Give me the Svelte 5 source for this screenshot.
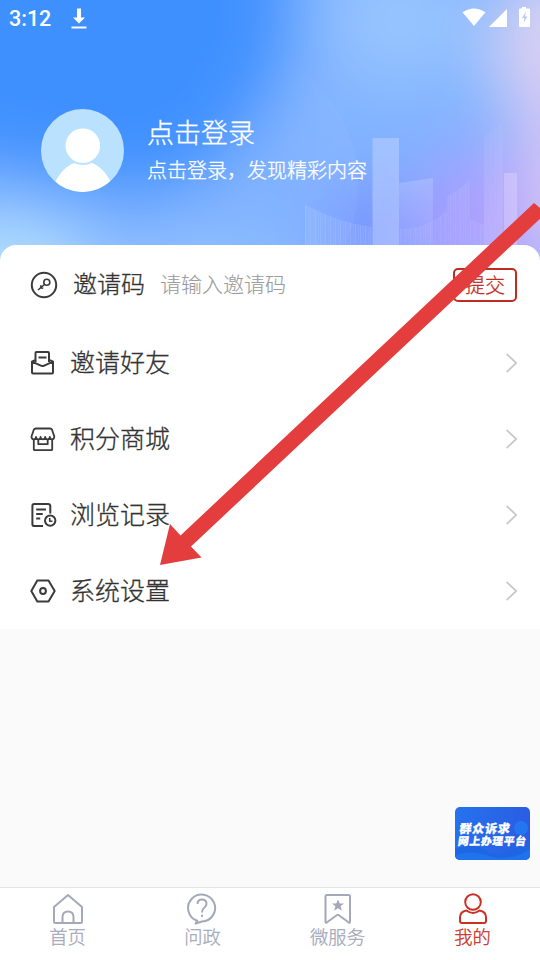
<script lang="ts">
  const menu = [
    { id: "friends", label: "邀请好友" },
    { id: "shop", label: "积分商城" },
    { id: "history", label: "浏览记录" },
    { id: "settings", label: "系统设置" },
  ];

  const tabs = [
    { id: "home", label: "首页" },
    { id: "ask", label: "问政" },
    { id: "service", label: "微服务" },
    { id: "mine", label: "我的" },
  ];

  let activeTab = $state("mine");
  let inviteCode = $state("");
</script>

<div class="screen">
  <header>
    <svg class="backdrop" viewBox="0 0 540 265" aria-hidden="true">
      <defs>
        <filter id="soft" x="-50%" y="-50%" width="200%" height="200%" color-interpolation-filters="sRGB">
          <feGaussianBlur stdDeviation="32" />
        </filter>
        <pattern id="stripes" width="5" height="10" patternUnits="userSpaceOnUse">
          <rect width="5" height="10" fill="#fff" opacity="0.07" />
          <rect width="1" height="10" fill="#fff" opacity="0.09" />
          <rect x="3" width="1" height="10" fill="#fff" opacity="0.04" />
        </pattern>
        <linearGradient id="pane" x1="0" y1="0" x2="0" y2="1">
          <stop offset="0" stop-color="#fff" stop-opacity="0.17" />
          <stop offset="1" stop-color="#fff" stop-opacity="0.02" />
        </linearGradient>
        <linearGradient id="tower" x1="0" y1="0" x2="0" y2="1">
          <stop offset="0" stop-color="#fff" stop-opacity="0" />
          <stop offset="1" stop-color="#fff" stop-opacity="0.13" />
        </linearGradient>
        <linearGradient id="halo" x1="0" y1="0" x2="1" y2="0">
          <stop offset="0.7" stop-color="#fff" stop-opacity="0" />
          <stop offset="1" stop-color="#fff" stop-opacity="0.04" />
        </linearGradient>
      </defs>
      <rect width="540" height="265" fill="#82b3ff" />
      <g filter="url(#soft)">
        <path d="M-90-90H-40H620V355H-90z" fill="#82b3ff" />
        <path d="M-90-90H290L285 60 230 150 150 195 30 170-90 150z" fill="#3f90ff" />
        <ellipse cx="-10" cy="270" rx="110" ry="56" fill="#b0ddff" />
        <ellipse cx="190" cy="285" rx="110" ry="42" fill="#92c4ff" />
        <ellipse cx="400" cy="20" rx="75" ry="65" fill="#96c4ff" />
        <ellipse cx="375" cy="235" rx="46" ry="50" fill="#7690ff" />
        <ellipse cx="480" cy="225" rx="65" ry="75" fill="#aa9eff" />
        <ellipse cx="575" cy="50" rx="85" ry="90" fill="#dad2f2" />
        <ellipse cx="575" cy="170" rx="58" ry="120" fill="#d6c6f4" />
      </g>
      <circle cx="215" cy="185" r="143" fill="url(#halo)" />
      <path d="M305 205q35 18 67 22v38h-67z" fill="url(#stripes)" />
      <path d="M399 229q28 0 48-18v-15q14-6 23-18v41l14 6V265h-85z" fill="url(#stripes)" opacity="0.7" />
      <path d="M484 136l19-14V265H484z" fill="url(#tower)" />
      <path d="M484 136l19-14V265H484z" fill="url(#stripes)" opacity="0.3" />
      <path d="M372.5 138H399V265H372.500z" fill="#bcd0ff" opacity="0.55" />
      <path d="M399 183l34-5V265H399z" fill="url(#pane)" />
      <path d="M504 173h13v92h-13z" fill="#e4d8ff" opacity="0.4" />
    </svg>

    <div class="status">
      <span class="time">3:12</span>
      <svg class="download" width="16" height="22" viewBox="0 0 16 22">
        <path d="M6 0.500h4v9h4l-6 6-6-6h4z" fill="#fff" />
        <path d="M0.500 18.500h15v2h-15z" fill="#fff" />
      </svg>
      <svg class="signals" width="68" height="22" viewBox="0 0 68 22">
        <path d="M-1.500 6.300Q10-1.300 21.500 6.300L10 20z" fill="#fff" />
        <path d="M43 3v18H25z" fill="#fff" />
        <path d="M58 1h4v1.500h3q1 0 1 1V20q0 1-1 1H56q-1 0-1-1V3.500q0-1 1-1h2z" fill="#fff" />
        <path d="M62 5.500l-4 6.500h2.500l-1 5 4-6.500H61z" fill="#bac9f5" />
      </svg>
    </div>

    <div class="profile">
      <svg width="83" height="83" viewBox="0 0 83 83">
        <clipPath id="face"><circle cx="41.5" cy="41.5" r="41.5" /></clipPath>
        <circle cx="41.5" cy="41.5" r="41.5" fill="#bae2ff" />
        <g clip-path="url(#face)" fill="#fff">
          <circle cx="41.8" cy="36.7" r="17.3" />
          <path d="M10 83Q18 60 33 54q9 4 18 0 15 6 23 29z" />
        </g>
      </svg>
      <div>
        <div class="name">点击登录</div>
        <div class="hint">点击登录，发现精彩内容</div>
      </div>
    </div>
  </header>

  <section class="card">
    <div class="invite">
      <svg width="28" height="28" viewBox="0 0 28 28" class="icon">
        <circle cx="14" cy="14" r="12.2" />
        <circle cx="16.8" cy="11.2" r="3" stroke-width="1.6" />
        <path d="M14.500 13.500L8 19M10.800 14.200l.2 2.500 2.300.5" stroke-width="1.6" />
      </svg>
      <label for="code">邀请码</label>
      <input id="code" placeholder="请输入邀请码" bind:value={inviteCode} />
      <button class="submit">提交</button>
    </div>

    {#each menu as item (item.id)}
      <div class="row">
        <svg width="28" height="28" viewBox="0 0 28 28" class="icon">
          {#if item.id === "friends"}
            <path d="M6.500 13V4q0-1 1-1h11.500q1 0 1 1v9M9.500 8.500h8" />
            <path d="M6 11L3 12.700V23.500q0 1 1 1h19q1 0 1-1V12.700L21 11M3 12.700l8.800 4q1.700.8 3.400 0L24 12.700" />
          {:else if item.id === "shop"}
            <path d="M6.500 3.500h14.500q1.500 0 2 1.200l2.300 6.800q0 2.800-2.300 2.800-2.200 0-2.200-2.300 0 2.300-2.300 2.300t-2.300-2.300q0 2.300-2.300 2.300t-2.300-2.300q0 2.300-2.300 2.300t-2.300-2.300q0 2.300-2.200 2.300-2.300 0-2.300-2.800l2.300-6.800q.5-1.200 2-1.200z" stroke-width="1.8" />
            <path d="M4.800 14.500v9.700q0 1 1 1h16.400q1 0 1-1v-9.700M9.300 15v4.200h9.400V15" stroke-width="1.8" />
          {:else if item.id === "history"}
            <path d="M14 25H5.200q-1.800 0-1.800-1.800V5Q3.400 3 5.200 3H19q2.300 0 2.300 2.300v7.200" />
            <path d="M7.200 8.500H17M7.200 13h6.500M7.200 17.500h4" />
            <circle cx="21.2" cy="19.6" r="5.200" />
            <path d="M20.700 17v3.200h2.800" stroke-width="1.6" />
          {:else}
            <path d="M8.300 3.500h11.200L25.700 14l-6.200 10.500H8.300L2.300 14z" />
            <circle cx="14" cy="14" r="2.900" />
          {/if}
        </svg>
        <span>{item.label}</span>
        <svg class="chevron" width="12" height="20" viewBox="0 0 12 20">
          <path d="M1.700 1l9.500 9-9.500 9" />
        </svg>
      </div>
    {/each}
  </section>

  <main>
    <div class="banner">
      <svg width="75" height="53" viewBox="0 0 75 53" aria-hidden="true">
        <circle cx="66" cy="21" r="7" fill="#2277f0" />
        <path d="M0 42q16-8 32 2t43-10v19H0z" fill="#1f66e4" />
        <path d="M0 49q14-7 34 0t41-7v11H0z" fill="#1f74ee" />
      </svg>
      <div class="slogan">
        <b>群众诉求</b>
        <b class="second">网上办理平台</b>
      </div>
    </div>
  </main>

  <nav>
    {#each tabs as tab (tab.id)}
      <button class="tab" class:active={activeTab === tab.id} onclick={() => (activeTab = tab.id)}>
        <svg width="32" height="32" viewBox="0 0 32 32">
          {#if tab.id === "home"}
            <path d="M2 14L16 2l14 12v14.500q0 1.500-1.500 1.500h-25Q2 30 2 28.500z" />
            <path d="M10.500 30v-6q0-5.500 5.500-5.500t5.500 5.500v6" />
          {:else if tab.id === "ask"}
            <path d="M10.300 27.800A13.500 13.500 0 1 1 15 28.500L8.500 30.500z" />
            <path d="M10.500 11q0-4.500 4.500-4.500t4.500 4.500q0 2-2.500 4-2 1.500-2 4.500M15 21.800v2.200" />
          {:else if tab.id === "service"}
            <path d="M4.500 2h22q1.500 0 1.500 1.500v25q0 1.800-1.500.8L16.500 22q-.7-.5-1.400 0L5 29.300q-1.500 1-1.500-.8v-25Q3.500 2 4.500 2z" />
            <path class="solid" d="M16 6.500l1.700 4h4.300l-3.400 2.800 1.300 4.400-3.900-2.500-3.900 2.500 1.300-4.400L10 10.500h4.300z" />
          {:else}
            <circle cx="16" cy="9" r="7.800" />
            <path d="M9.500 17.500q6.500 5 13 0 6.500 1 6.500 7v3.500q0 2-2 2H5q-2 0-2-2v-3.500q0-6 6.500-7z" />
          {/if}
        </svg>
        <span>{tab.label}</span>
      </button>
    {/each}
  </nav>

  <!-- pointer to the settings row -->
  <svg class="arrow" viewBox="0 0 540 960" aria-hidden="true">
    <path d="M160 565L170 524 180.500 535.500 534 203 546 213 191 546.500 201.500 557.500z" fill="#e43d3d" />
  </svg>
</div>

<style>
  :global(body) {
    margin: 0;
  }

  .screen {
    position: relative;
    display: flex;
    flex-direction: column;
    width: 540px;
    height: 960px;
    overflow: hidden;
    background: #fafafb;
    font-family: "Noto Sans CJK SC", sans-serif;
    font-weight: 300;
    color: #333;
    -webkit-text-stroke: 0.3px currentColor;
  }

  button,
  input {
    padding: 0;
    border: 0;
    background: none;
    font: inherit;
    color: inherit;
    outline: none;
  }

  header {
    position: relative;
    height: 245px;
    color: #fff;
  }

  .backdrop {
    position: absolute;
    top: 0;
    left: 0;
    width: 540px;
    height: 265px;
  }

  .status {
    position: relative;
    display: flex;
    align-items: center;
    height: 37px;
    padding: 0 8px 0 9px;
  }

  .time {
    width: 62px;
    font: 500 21.5px Roboto, sans-serif;
    -webkit-text-stroke: 0;
  }

  .signals {
    margin: -4px 0 0 auto;
    overflow: visible;
  }

  .profile {
    position: relative;
    display: flex;
    gap: 23px;
    padding: 72px 0 0 41px;
  }

  .name {
    margin-top: 3px;
    font-size: 27px;
    line-height: 40px;
  }

  .hint {
    margin-top: 3px;
    font-size: 20px;
    line-height: 30px;
  }

  .card {
    position: relative;
    flex: none;
    border-radius: 16px 16px 0 0;
    background: #fff;
  }

  .icon {
    flex: none;
    fill: none;
    stroke: #3b3b3d;
    stroke-width: 2;
    stroke-linejoin: round;
  }

  .invite {
    display: flex;
    align-items: center;
    height: 80px;
    padding: 0 23px 0 30px;
  }

  .invite label {
    width: 87px;
    margin: -5px 0 0 15px;
    font-size: 24px;
  }

  .invite input {
    flex: 1;
    min-width: 0;
    margin-top: -4px;
    font-size: 21px;
  }

  .invite input::placeholder {
    color: #9c9c9c;
    opacity: 1;
    -webkit-text-stroke: 0.1px #9c9c9c;
  }

  .submit {
    box-sizing: border-box;
    width: 64px;
    height: 34px;
    border: 2px solid #c12c20;
    border-radius: 5px;
    font-size: 20px;
    line-height: 28px;
    color: #c12c20;
  }

  .row {
    display: flex;
    align-items: center;
    height: 76px;
    padding: 0 23px 0 29px;
  }

  .row span {
    margin: -4px 0 0 13px;
    font-size: 25px;
  }

  .chevron {
    margin-left: auto;
    fill: none;
    stroke: #c9c9cb;
    stroke-width: 1.8;
  }

  main {
    flex: 1;
    display: flex;
    justify-content: flex-end;
    align-items: flex-end;
    padding: 0 10px 27px 0;
  }

  .banner {
    display: grid;
    width: 75px;
    height: 53px;
    overflow: hidden;
    border-radius: 5px;
    background: linear-gradient(100deg, #2672ee, #2a5be2);
  }

  .banner > * {
    grid-area: 1 / 1;
  }

  .slogan {
    display: flex;
    flex-direction: column;
    padding: 14px 0 0 4px;
    font-size: 12px;
    line-height: 13px;
    letter-spacing: 0.7px;
    color: #fff;
    white-space: nowrap;
    transform: skewX(-8deg);
  }

  .slogan b {
    font-weight: 900;
  }

  .slogan .second {
    font-size: 10.8px;
    line-height: 12px;
  }

  nav {
    display: flex;
    box-sizing: border-box;
    height: 73px;
    border-top: 1px solid #e4e4e6;
    background: #fff;
  }

  .tab {
    flex: 1;
    display: flex;
    flex-direction: column;
    align-items: center;
    padding-top: 5px;
    color: #a4a8b9;
    font-size: 18.3px;
    line-height: 22px;
  }

  .tab svg {
    fill: none;
    stroke: currentColor;
    stroke-width: 2;
    stroke-linejoin: round;
  }

  .tab .solid {
    fill: currentColor;
    stroke: none;
  }

  .tab.active {
    color: #cb3024;
  }

  .arrow {
    position: absolute;
    top: 0;
    left: 0;
    width: 540px;
    height: 960px;
    pointer-events: none;
  }
</style>
